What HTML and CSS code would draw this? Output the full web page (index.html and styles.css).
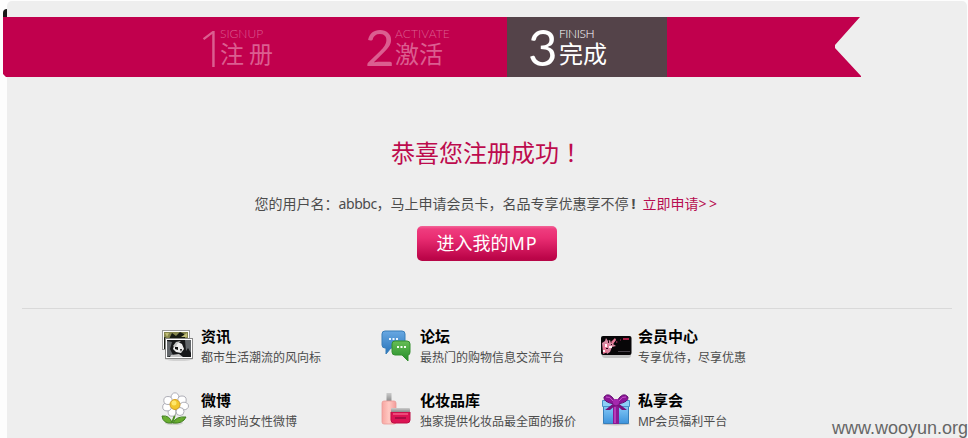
FILE: index.html
```
<!DOCTYPE html>
<html lang="zh-CN">
<head>
<meta charset="utf-8">
<title>注册成功</title>
<link rel="stylesheet" href="styles.css">
</head>
<body>
<main class="panel">
  <div class="fold"></div>
  <nav class="ribbon">
    <div class="step"><span class="num one">1</span><div class="label"><span class="en signup">SIGNUP</span><span class="zh spaced">注册</span></div></div>
    <div class="step"><span class="num two">2</span><div class="label"><span class="en activate">ACTIVATE</span><span class="zh">激活</span></div></div>
    <div class="step active"><span class="num three">3</span><div class="label"><span class="en finish">FINISH</span><span class="zh">完成</span></div></div>
  </nav>
  <section class="result">
    <h1>恭喜您注册成功<span class="exclaim" lang="zh-TW">！</span></h1>
    <p>您的用户名：<span class="user">abbbc</span>，马上申请会员卡，名品专享优惠享不停<b class="bang">!</b><a class="apply">立即申请<span class="more">&gt;&gt;</span></a></p>
    <a class="enter">进入我的<span class="mp">MP</span></a>
  </section>
  <section class="links">
    <div class="item">
      <svg width="34" height="34" viewBox="0 0 34 34">
        <ellipse cx="18" cy="31" rx="14" ry="2" fill="#d2d2d2"/>
        <rect x="1.500" y="2.500" width="27" height="19" fill="#fff" stroke="#999"/>
        <rect x="3" y="4" width="24" height="16" fill="#85864d"/>
        <path d="M3 9l5 2 3-6 4 3 4-4 4 2 1 3v9H6v3H3z" fill="#171b12"/>
        <path d="M4 5l4 0-2 4zM20 9h6V5z" fill="#c0bd75"/>
        <rect x="4.500" y="10.500" width="27" height="20" fill="#fff" stroke="#888"/>
        <rect x="6" y="12" width="24" height="17" fill="#17181a"/>
        <path d="M6 13l5 1-2 7 3 6-6 2zM24 12h6v13l-3-5-2 3z" fill="#62666a"/>
        <path d="M13 18l4-4 4 2 2 5-3 4-5-1-3-3z" fill="#eee"/>
        <path d="M12 18l3-4 5-1-4 3-1 4zM10 27l8-1 4 3H9z" fill="#c5c5c5"/>
        <path d="M14 19l3 0 0 3-3-1zM19 21l2 0-1 3z" fill="#111"/>
      </svg>
      <div class="copy"><h2>资讯</h2><p>都市生活潮流的风向标</p></div>
    </div>
    <div class="item">
      <svg width="34" height="34" viewBox="0 0 34 34">
        <defs>
          <linearGradient id="blue" x2="0" y2="1"><stop stop-color="#68a8e2"/><stop offset="1" stop-color="#2673b9"/></linearGradient>
          <linearGradient id="green" x2="0" y2="1"><stop stop-color="#66bd55"/><stop offset="1" stop-color="#248d2a"/></linearGradient>
        </defs>
        <path d="M5 3h17q3 0 3 3v11q0 3-3 3H11l-5 6v-6H5q-3 0-3-3V6q0-3 3-3z" fill="url(#blue)" stroke="#387eb9"/>
        <path d="M9 10h2v2H9zM12.500 10h2v2h-2zM16 10h2v2h-2z" fill="#eaf5ff"/>
        <path d="M15 13h12q3 0 3 3v8q0 3-2 3v6l-6-6h-7q-3 0-3-3v-8q0-3 3-3z" fill="url(#green)" stroke="#34902f"/>
        <path d="M17 18h2v2h-2zM20.500 18h2v2h-2zM24 18h2v2h-2z" fill="#f3fff0"/>
      </svg>
      <div class="copy"><h2>论坛</h2><p>最热门的购物信息交流平台</p></div>
    </div>
    <div class="item">
      <svg width="34" height="34" viewBox="0 0 34 34">
        <rect x="2" y="11" width="29" height="19" rx="3" fill="#c4c4c4"/>
        <rect x="1" y="8" width="30.500" height="19" rx="2" fill="#080608"/>
        <path d="M2 15l3-2 1-3 2 3 2-1 1 3 5-4-3 5 3 2-4 1-2 5-3 2-1-3-3 2z" fill="#d98aa2"/>
        <path d="M3 18l4-3 2 3-3 2 2 4-5 2zM11 14l4-4 1 2-3 4z" fill="#e97a98"/>
        <path d="M5 16h2v3H5zM3 22h2v2H3zM9 18h3v2H9z" fill="#fff0f3"/>
        <path d="M8 13h1v2H8zM6 20h2v1H6zM11 16h1v1h-1z" fill="#2a0815"/>
        <path d="M16 13l2 1-2 1zM20 11l1 1-1 1z" fill="#942e55"/>
        <rect x="23" y="10" width="6" height="2" fill="#a72147"/>
        <path d="M18 23h12v1H18z" fill="#48424a"/>
      </svg>
      <div class="copy"><h2>会员中心</h2><p>专享优待，尽享优惠</p></div>
    </div>
    <div class="item">
      <svg width="34" height="34" viewBox="0 0 34 34">
        <ellipse cx="13" cy="31" rx="9" ry="2" fill="#d0d0d0"/>
        <path d="M14 18q0 7-3 13" fill="none" stroke="#4d8f23" stroke-width="2"/>
        <path d="M11 31Q2 32 1 24q8-1 10 7z" fill="#69af2f" stroke="#427f22"/>
        <path d="M12 31q3-7 13-6-3 7-13 6z" fill="#67ac2e" stroke="#427f22"/>
        <g fill="#fff" stroke="#9c9ca6" stroke-width=".8">
          <ellipse cx="14" cy="5.500" rx="4" ry="4.700"/><ellipse cx="21" cy="8" rx="4.200" ry="4"/>
          <ellipse cx="23" cy="14" rx="4.500" ry="3.800"/><ellipse cx="19" cy="19.500" rx="4" ry="4"/>
          <ellipse cx="11" cy="20" rx="3.900" ry="4.200"/><ellipse cx="6" cy="15" rx="4.300" ry="3.900"/>
          <ellipse cx="7" cy="8.500" rx="4.200" ry="4"/>
        </g>
        <circle cx="14" cy="12.500" r="5" fill="#f1c62c" stroke="#d69f25"/>
        <circle cx="13" cy="11" r="2.500" fill="#ffe66b"/>
      </svg>
      <div class="copy"><h2>微博</h2><p>首家时尚女性微博</p></div>
    </div>
    <div class="item">
      <svg width="34" height="34" viewBox="0 0 34 34">
        <defs>
          <linearGradient id="bottle"><stop stop-color="#f7a5a0"/><stop offset=".5" stop-color="#ffc9c3"/><stop offset="1" stop-color="#f39b99"/></linearGradient>
          <linearGradient id="cap" x2="0" y2="1"><stop stop-color="#ccc"/><stop offset="1" stop-color="#8c8c8c"/></linearGradient>
        </defs>
        <rect x="6.500" y="1" width="5" height="8" fill="url(#cap)"/>
        <rect x="2" y="9" width="14" height="23" rx="2" fill="url(#bottle)" stroke="#ea9b98" stroke-width=".8"/>
        <path d="M11 20h19v8q0 3-3 3H14q-3 0-3-3z" fill="#dc1454" stroke="#bc0c45"/>
        <path d="M15 25h11v2H15z" fill="#a90b43"/>
        <path d="M13 21h15v2H13z" fill="#ee4979"/>
        <rect x="11" y="16" width="19" height="4" rx="1" fill="url(#cap)"/>
      </svg>
      <div class="copy"><h2>化妆品库</h2><p>独家提供化妆品最全面的报价</p></div>
    </div>
    <div class="item">
      <svg width="34" height="34" viewBox="0 0 34 34">
        <defs><linearGradient id="box" x2="0" y2="1"><stop stop-color="#8ed0fa"/><stop offset="1" stop-color="#3d93dc"/></linearGradient></defs>
        <ellipse cx="16" cy="32" rx="14" ry="1.500" fill="#c5c5c5"/>
        <path d="M3.500 12h25v19.500h-25z" fill="url(#box)" stroke="#397fb9"/>
        <path d="M2.500 8.500h27v6h-27z" fill="#8dcef7" stroke="#4990c8"/>
        <path d="M13 10h6v22h-6z" fill="#8b1994"/><path d="M14 15h2v16h-2z" fill="#b63cb9"/>
        <path d="M15 9Q9-1 4 5q-1 5 10 7zM17 9q6-10 11-4 1 5-10 7z" fill="#8c1598" stroke="#641070"/>
        <path d="M14 11l-9 7 5 0 6-5zM18 11l9 7-5 0-6-5z" fill="#79117f"/>
        <path d="M6 5q4-1 7 4M26 5q-4-1-7 4" fill="none" stroke="#c556ca"/>
        <rect x="13" y="7" width="6" height="6" rx="2" fill="#a429ae"/>
      </svg>
      <div class="copy"><h2>私享会</h2><p><span class="mp-small">MP</span>会员福利平台</p></div>
    </div>
  </section>
</main>
<div class="watermark">www.wooyun.org</div>
</body>
</html>
```
FILE: styles.css
```
* { box-sizing: border-box; }
body {
  margin: 0;
  width: 968px;
  height: 438px;
  overflow: hidden;
  position: relative;
  background: #fdfdfd;
  color: #4c4c4c;
  font-family: "Noto Sans", "Noto Sans CJK SC", sans-serif;
  white-space: nowrap;
}
.panel {
  width: 960px;
  height: 437px;
  margin: 1px 0 0 7px;
  padding-top: 16px;
  background: #eee;
  border-radius: 5px 5px 0 0;
  position: relative;
}
.fold {
  position: absolute;
  left: -4px;
  top: 8px;
  width: 5px;
  height: 9px;
  background: #181818;
  border-radius: 4px 0 0 0;
  clip-path: inset(0 1px 0 0);
}
.ribbon {
  display: flex;
  width: 858px;
  height: 60px;
  margin-left: -4px;
  padding-left: 184px;
  position: relative;
  background: #c1004d;
  clip-path: polygon(0 0, 857px 0, 832px 28px, 832px 31px, 858px 59px, 858px 60px, 3px 60px, 0 57px);
}
.step {
  display: flex;
  width: 160px;
  height: 60px;
  padding-left: 11px;
  color: #db5e90;
}
.step.active { background: #544349; color: #fff; padding-left: 21px; }
.num { font: 400 51px/60px Lato, sans-serif; }
.one { width: 22px; font: 300 50px/62px "Open Sans", sans-serif; letter-spacing: -6px; }
.two { margin-left: 7px; width: 30px; }
.three { width: 31px; }
.label { display: flex; flex-direction: column; padding-top: 11px; }
.en { font: 300 12px/12px Lato, sans-serif; height: 12px; }
.activate { letter-spacing: .1px; }
.finish { letter-spacing: -.4px; }
.zh { font: 400 24px/26px "Noto Sans CJK SC", sans-serif; }
.spaced { letter-spacing: 5px; }
.result {
  display: flex;
  flex-direction: column;
  align-items: center;
  height: 232px;
  margin: 0 15px;
  padding-top: 57px;
  border-bottom: 1px solid #d9d9d9;
}
h1 {
  margin: 0;
  color: #bd0b4d;
  font: 400 24px/36px "Noto Sans CJK SC", sans-serif;
}
.exclaim { font-family: "Noto Sans CJK TC", sans-serif; }
.result p {
  margin: 24px 0 0;
  font: 14px/20px "Noto Sans", "Noto Sans CJK SC", sans-serif;
}
.user { display: inline-block; width: 38px; letter-spacing: -.4px; }
.bang { display: inline-block; width: 14px; padding-left: 3px; }
.apply { color: #b70d50; }
.more { display: inline-block; letter-spacing: 2.500px; }
.enter {
  display: flex;
  justify-content: center;
  width: 140px;
  height: 35px;
  margin-top: 12px;
  border-radius: 5px;
  background: linear-gradient(#f26798 0, #ef3c7e 3px, #e92d72 12px, #bc0549 32px, #b50646);
  color: #fff;
  font: 18px/34px "Noto Sans", "Noto Sans CJK SC", sans-serif;
}
.mp { letter-spacing: .9px; }
.links {
  display: grid;
  grid-template-columns: 219px 220px 220px;
  grid-auto-rows: 64px;
  padding: 19px 0 0 154px;
}
.item { display: flex; }
.item svg { display: block; width: 34px; height: 34px; }
.copy { margin-left: 6px; }
.item:nth-child(3n) .copy { margin-left: 4px; }
h2 {
  margin: 0;
  color: #000;
  font: bold 15px/15px "Noto Sans CJK SC", sans-serif;
}
.copy p {
  margin: 5px 0 0;
  font: 12px/20px "Noto Sans", "Noto Sans CJK SC", sans-serif;
}
.mp-small { letter-spacing: -.4px; }
.watermark {
  position: absolute;
  right: 0;
  bottom: -1px;
  color: #666;
  font: 18px/22px "Liberation Sans", sans-serif;
}
```
